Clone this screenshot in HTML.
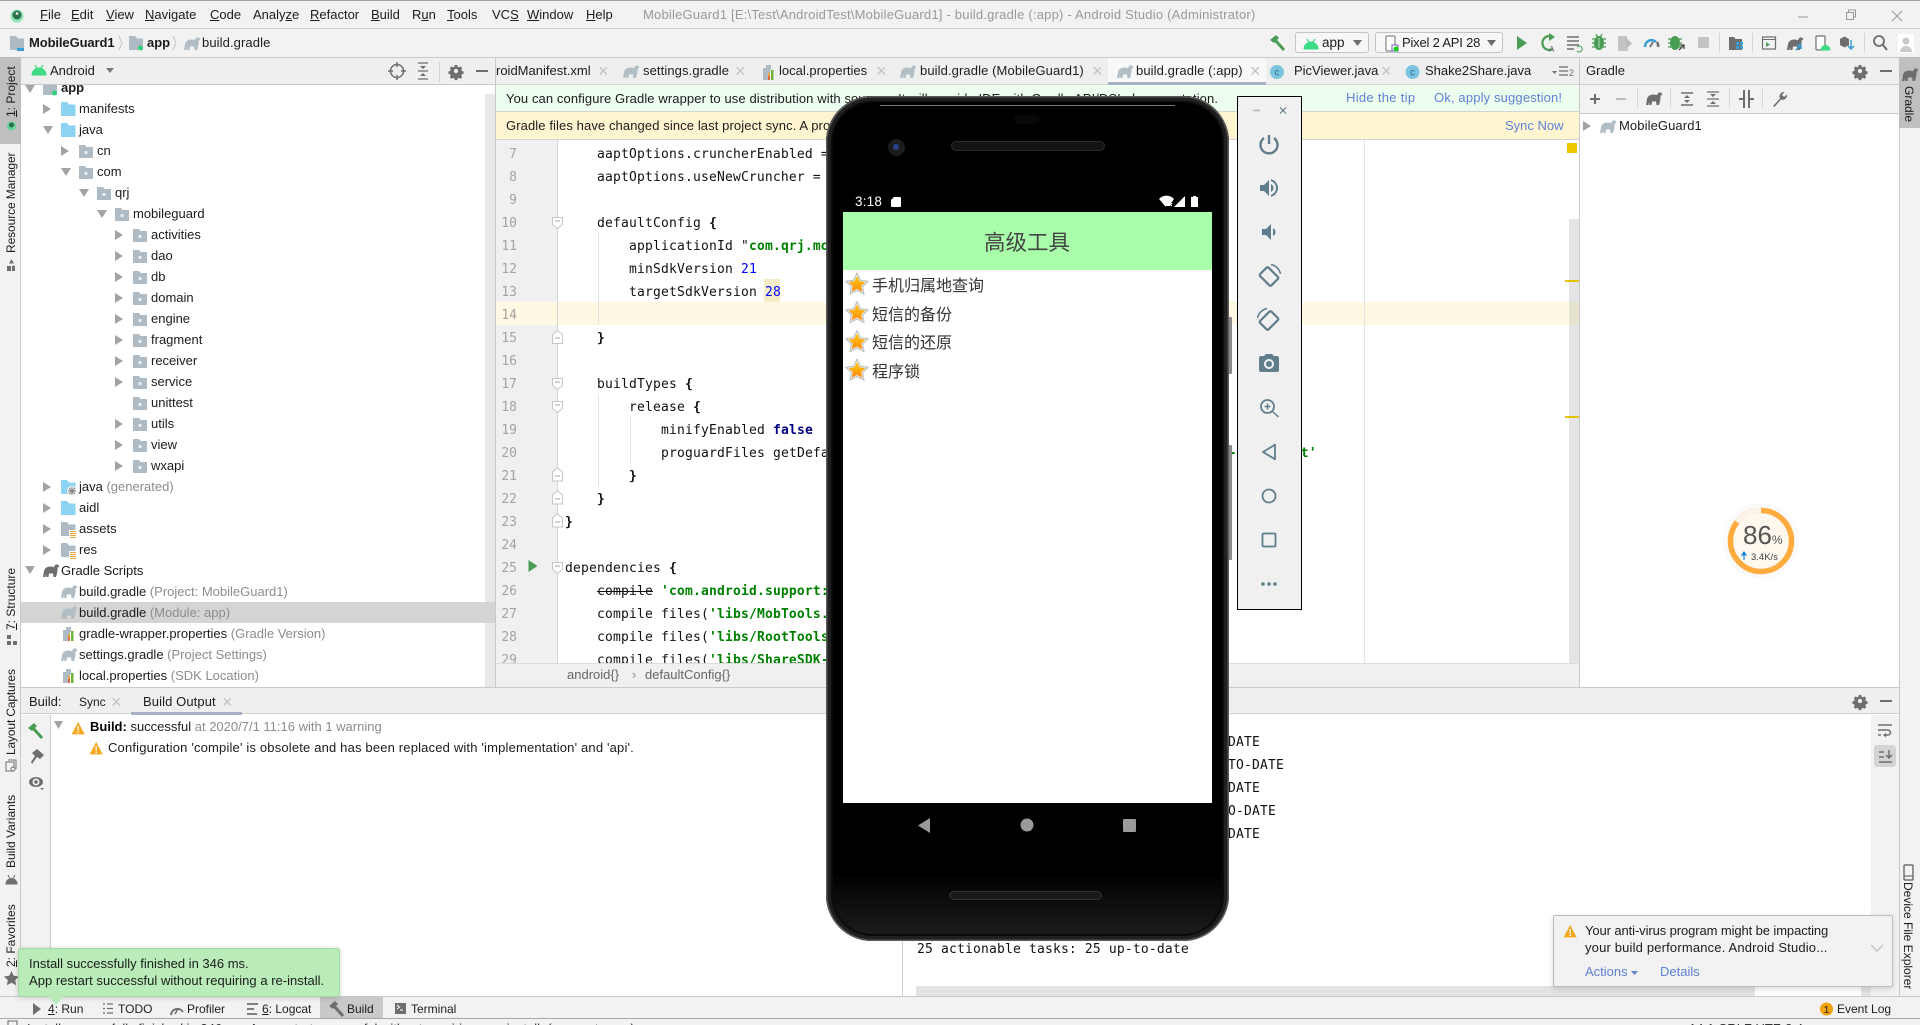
<!DOCTYPE html>
<html><head><meta charset="utf-8"><title>MobileGuard1 - Android Studio</title>
<style>
html,body{margin:0;padding:0;background:#fff}
#root{position:relative;width:1920px;height:1025px;overflow:hidden;background:#fff;font-family:"Liberation Sans","Noto Sans CJK SC",sans-serif}
.b{position:absolute}
.t{position:absolute;white-space:nowrap;font:13px/18px "Liberation Sans","Noto Sans CJK SC",sans-serif;color:#1c1c1c}
.s12{font-size:12px}
.g{color:#8c8c8c}
.l{color:#5f82d6}
.d{color:#999}
.x{position:absolute;white-space:nowrap;font:18px/18px "Liberation Sans",sans-serif;color:#c2c2c2}
.c{position:absolute;white-space:pre;font:13px/18px "DejaVu Sans Mono",monospace;letter-spacing:.17px;color:#111}
.c b.s{color:#008000}
.c i{font-style:normal;color:#0000ff}
.n{position:absolute;left:496px;width:21px;text-align:right;font:13px/18px "DejaVu Sans Mono",monospace;color:#a3a3a3}
.v{position:absolute;white-space:nowrap;font:12px/14px "Liberation Sans",sans-serif;color:#1c1c1c;transform-origin:0 0;transform:rotate(-90deg)}
.r{transform:rotate(90deg)}
.clip{position:absolute;overflow:hidden}
svg{position:absolute;left:0;top:0;overflow:visible}
</style></head><body><div id="root">

<!-- frame backgrounds -->
<div class="b" style="left:0;top:0;width:1920px;height:57px;background:#f2f2f2"></div>
<div class="b" style="left:0;top:0;width:1920px;height:1px;background:#a0a0a0"></div>
<div class="b" style="left:0;top:28px;width:1920px;height:1px;background:#cfcfcf"></div>
<div class="b" style="left:0;top:57px;width:1920px;height:1px;background:#c9c9c9"></div>
<div class="b" style="left:0;top:57px;width:21px;height:961px;background:#f2f2f2;border-right:1px solid #c9c9c9;box-sizing:border-box"></div>
<div class="b" style="left:0;top:57px;width:21px;height:87px;background:#bfbfbf"></div>
<div class="b" style="left:1899px;top:57px;width:21px;height:961px;background:#f2f2f2;border-left:1px solid #c9c9c9;box-sizing:border-box"></div>
<div class="b" style="left:1899px;top:57px;width:21px;height:71px;background:#bfbfbf"></div>

<!-- title bar text -->
<span class="t" style="left:40px;top:6px"><u>F</u>ile</span>
<span class="t" style="left:71px;top:6px"><u>E</u>dit</span>
<span class="t" style="left:106px;top:6px"><u>V</u>iew</span>
<span class="t" style="left:145px;top:6px"><u>N</u>avigate</span>
<span class="t" style="left:210px;top:6px"><u>C</u>ode</span>
<span class="t" style="left:253px;top:6px">Analy<u>z</u>e</span>
<span class="t" style="left:310px;top:6px"><u>R</u>efactor</span>
<span class="t" style="left:371px;top:6px"><u>B</u>uild</span>
<span class="t" style="left:412px;top:6px">R<u>u</u>n</span>
<span class="t" style="left:447px;top:6px"><u>T</u>ools</span>
<span class="t" style="left:492px;top:6px">VC<u>S</u></span>
<span class="t" style="left:527px;top:6px"><u>W</u>indow</span>
<span class="t" style="left:586px;top:6px"><u>H</u>elp</span>
<span class="t d" style="left:643px;top:6px;letter-spacing:.21px">MobileGuard1 [E:\Test\AndroidTest\MobileGuard1] - build.gradle (:app) - Android Studio (Administrator)</span>

<!-- breadcrumb -->
<span class="t" style="left:29px;top:34px;font-weight:bold;letter-spacing:-.1px">MobileGuard1</span>
<span class="t" style="left:147px;top:34px;font-weight:bold">app</span>
<span class="t" style="left:202px;top:34px;letter-spacing:.1px">build.gradle</span>

<!-- run config dropdowns -->
<div class="b" style="left:1295px;top:32px;width:74px;height:21px;box-sizing:border-box;border:1px solid #c4c4c4;border-radius:3px;background:#f7f7f7"></div>
<div class="b" style="left:1375px;top:32px;width:128px;height:21px;box-sizing:border-box;border:1px solid #c4c4c4;border-radius:3px;background:#f7f7f7"></div>
<span class="t" style="left:1322px;top:34px;font-size:13.500px">app</span>
<span class="t" style="left:1402px;top:34px;letter-spacing:-.2px">Pixel 2 API 28</span>

<!-- project tree -->
<div class="clip" style="left:21px;top:84px;width:474px;height:603px">
 <div class="b" style="left:-21px;top:-84px;width:1920px;height:1025px">
  <div class="b" style="left:485px;top:94px;width:10px;height:593px;background:#e8e8e8"></div>
  <div class="b" style="left:21px;top:602px;width:474px;height:21px;background:#d4d4d4"></div>
  <svg width="1920" height="1025">
   <defs>
    <g id="pkg"><path fill="#aebbc4" d="M0 0h6l1.500 2H14v11H0z"/><circle cx="7" cy="7.500" r="1.600" fill="#e9eef2"/></g>
    <g id="src"><path fill="#8bd3f0" d="M0 0h6l2 2.500h6.500V14H0z"/></g>
    <g id="res"><path fill="#aebbc4" d="M0 0h6l2 2.500h6.500V14H0z"/><path fill="#fff" d="M8 8h7.500v8H8z"/><path stroke="#e8a33c" stroke-width="1.100" d="M9 9.500h6M9 11.500h6M9 13.500h6M9 15.500h6"/></g>
    <g id="mod"><path fill="#aebbc4" d="M0 0h6l2 2.500h6V14H0z"/><circle cx="11.500" cy="12" r="2.500" fill="#2fd07c"/></g>
    <path id="tr" fill="#a3a3a3" d="M0 0l8 5-8 5z"/>
    <path id="td" fill="#a3a3a3" d="M0 0h10l-5 8z"/>
    <path id="ele" d="M0 14L1 8Q2 3.500 7.500 3.500Q9.500 3.500 11 4.300Q12 1 14.500 1.500Q16.500 2 16 4.500L14.600 4Q14.800 9 13 14H10.500L10 10.500H6L5.500 14H3.300L3 11L2.400 14Z"/>
    <g id="prop"><path fill="#aebbc4" d="M1 5h3V2h5v5h-1v9H1z"/><path fill="#e8a33c" d="M6 9h2v7H6z"/><path fill="#e06c3c" d="M6 12h2v4H6z"/><path fill="#6fb33c" d="M9 6h2.500v10H9z"/></g>
   </defs>
   <use href="#td" x="25" y="85"/><use href="#mod" x="43" y="81"/>
   <use href="#tr" x="43" y="104"/><use href="#src" x="61" y="102"/>
   <use href="#td" x="43" y="126"/><use href="#src" x="61" y="123"/>
   <use href="#tr" x="61" y="146"/><use href="#pkg" x="79" y="145"/>
   <use href="#td" x="61" y="168"/><use href="#pkg" x="79" y="166"/>
   <use href="#td" x="79" y="189"/><use href="#pkg" x="97" y="187"/>
   <use href="#td" x="97" y="210"/><use href="#pkg" x="115" y="208"/>
   <use href="#tr" x="115" y="230"/><use href="#pkg" x="133" y="229"/>
   <use href="#tr" x="115" y="251"/><use href="#pkg" x="133" y="250"/>
   <use href="#tr" x="115" y="272"/><use href="#pkg" x="133" y="271"/>
   <use href="#tr" x="115" y="293"/><use href="#pkg" x="133" y="292"/>
   <use href="#tr" x="115" y="314"/><use href="#pkg" x="133" y="313"/>
   <use href="#tr" x="115" y="335"/><use href="#pkg" x="133" y="334"/>
   <use href="#tr" x="115" y="356"/><use href="#pkg" x="133" y="355"/>
   <use href="#tr" x="115" y="377"/><use href="#pkg" x="133" y="376"/>
   <use href="#pkg" x="133" y="397"/>
   <use href="#tr" x="115" y="419"/><use href="#pkg" x="133" y="418"/>
   <use href="#tr" x="115" y="440"/><use href="#pkg" x="133" y="439"/>
   <use href="#tr" x="115" y="461"/><use href="#pkg" x="133" y="460"/>
   <use href="#tr" x="43" y="482"/><use href="#src" x="61" y="480"/>
   <g transform="translate(67,486)"><circle cx="5" cy="5" r="5" fill="#f4f4f4"/><path stroke="#8a8a8a" stroke-width="1.200" d="M1 5h8M5 1v8M2 2l6 6M8 2l-6 6"/></g>
   <use href="#tr" x="43" y="503"/><use href="#src" x="61" y="501"/>
   <use href="#tr" x="43" y="524"/><use href="#res" x="61" y="522"/>
   <use href="#tr" x="43" y="545"/><use href="#res" x="61" y="543"/>
   <use href="#td" x="25" y="566"/><use href="#ele" x="43" y="563" fill="#6e6e6e"/>
   <use href="#ele" x="61" y="584" fill="#b2bec6"/>
   <use href="#ele" x="61" y="605" fill="#b2bec6"/>
   <use href="#prop" x="62" y="625"/>
   <use href="#ele" x="61" y="647" fill="#b2bec6"/>
   <use href="#prop" x="62" y="667"/>
  </svg>
  <span class="t" style="left:61px;top:79px;font-weight:bold">app</span>
  <span class="t" style="left:79px;top:100px">manifests</span>
  <span class="t" style="left:79px;top:121px">java</span>
  <span class="t" style="left:97px;top:142px">cn</span>
  <span class="t" style="left:97px;top:163px">com</span>
  <span class="t" style="left:115px;top:184px">qrj</span>
  <span class="t" style="left:133px;top:205px">mobileguard</span>
  <span class="t" style="left:151px;top:226px">activities</span>
  <span class="t" style="left:151px;top:247px">dao</span>
  <span class="t" style="left:151px;top:268px">db</span>
  <span class="t" style="left:151px;top:289px">domain</span>
  <span class="t" style="left:151px;top:310px">engine</span>
  <span class="t" style="left:151px;top:331px">fragment</span>
  <span class="t" style="left:151px;top:352px">receiver</span>
  <span class="t" style="left:151px;top:373px">service</span>
  <span class="t" style="left:151px;top:394px">unittest</span>
  <span class="t" style="left:151px;top:415px">utils</span>
  <span class="t" style="left:151px;top:436px">view</span>
  <span class="t" style="left:151px;top:457px">wxapi</span>
  <span class="t" style="left:79px;top:478px">java <span class="g">(generated)</span></span>
  <span class="t" style="left:79px;top:499px">aidl</span>
  <span class="t" style="left:79px;top:520px">assets</span>
  <span class="t" style="left:79px;top:541px">res</span>
  <span class="t" style="left:61px;top:562px">Gradle Scripts</span>
  <span class="t" style="left:79px;top:583px">build.gradle <span class="g">(Project: MobileGuard1)</span></span>
  <span class="t" style="left:79px;top:604px">build.gradle <span class="g">(Module: app)</span></span>
  <span class="t" style="left:79px;top:625px">gradle-wrapper.properties <span class="g">(Gradle Version)</span></span>
  <span class="t" style="left:79px;top:646px">settings.gradle <span class="g">(Project Settings)</span></span>
  <span class="t" style="left:79px;top:667px">local.properties <span class="g">(SDK Location)</span></span>
 </div>
</div>

<!-- project header -->
<div class="b" style="left:21px;top:58px;width:474px;height:26px;background:#efefef;border-bottom:1px solid #c9c9c9;box-sizing:content-box"></div>
<span class="t" style="left:50px;top:62px">Android</span>

<!-- editor -->
<div class="b" style="left:495px;top:57px;width:1px;height:630px;background:#c9c9c9"></div>
<div class="b" style="left:496px;top:58px;width:1083px;height:26px;background:#efefef"></div>
<div class="b" style="left:496px;top:84px;width:1083px;height:28px;background:#edfdee;box-sizing:border-box;border-top:1px solid #d4d4d4;border-bottom:1px solid #d4d4d4"></div>
<div class="b" style="left:496px;top:112px;width:1083px;height:28px;background:#fff5d0;box-sizing:border-box;border-bottom:1px solid #d4d4d4"></div>
<div class="b" style="left:496px;top:140px;width:61px;height:523px;background:#f0f0f0;border-right:1px solid #d4d4d4"></div>
<div class="b" style="left:496px;top:302px;width:61px;height:23px;background:#fff9e3"></div>
<div class="b" style="left:558px;top:302px;width:1021px;height:23px;background:#fff9e3"></div>
<div class="b" style="left:1364px;top:140px;width:1px;height:523px;background:#e5e5e5"></div>
<div class="b" style="left:1569px;top:219px;width:10px;height:444px;background:#e4e4e4"></div>
<div class="b" style="left:1569px;top:302px;width:10px;height:23px;background:#e6e3cf"></div>
<div class="b" style="left:1567px;top:143px;width:10px;height:10px;background:#edc700"></div>
<div class="b" style="left:1565px;top:280px;width:14px;height:2px;background:#e3c000"></div>
<div class="b" style="left:1565px;top:416px;width:14px;height:2px;background:#e3c000"></div>
<div class="b" style="left:764px;top:279px;width:16px;height:23px;background:#f6edc8"></div>
<div class="b" style="left:598px;top:232px;width:1px;height:93px;background:#e2e2e2"></div>
<div class="b" style="left:598px;top:395px;width:1px;height:91px;background:#e2e2e2"></div>
<div class="b" style="left:630px;top:417px;width:1px;height:46px;background:#e2e2e2"></div>

<!-- tabs active -->
<div class="b" style="left:1108px;top:58px;width:158px;height:24px;background:#f8f8f8"></div>
<div class="b" style="left:1108px;top:82px;width:158px;height:3px;background:#a6b1c3"></div>
<span class="t" style="left:496px;top:62px">roidManifest.xml</span><span class="x" style="left:598px;top:62px">×</span>
<span class="t" style="left:643px;top:62px;letter-spacing:.1px">settings.gradle</span><span class="x" style="left:735px;top:62px">×</span>
<span class="t" style="left:779px;top:62px">local.properties</span><span class="x" style="left:876px;top:62px">×</span>
<span class="t" style="left:920px;top:62px;letter-spacing:.1px">build.gradle (MobileGuard1)</span><span class="x" style="left:1092px;top:62px">×</span>
<span class="t" style="left:1136px;top:62px;letter-spacing:.1px">build.gradle (:app)</span><span class="x" style="left:1250px;top:62px">×</span>
<span class="t" style="left:1294px;top:62px">PicViewer.java</span><span class="x" style="left:1381px;top:62px">×</span>
<span class="t" style="left:1425px;top:62px">Shake2Share.java</span>

<!-- tip bars -->
<span class="t" style="left:506px;top:90px;letter-spacing:.1px">You can configure Gradle wrapper to use distribution with sources. It will provide IDE with Gradle API/DSL documentation.</span>
<span class="t l" style="left:1346px;top:89px;letter-spacing:.3px">Hide the tip</span>
<span class="t l" style="left:1434px;top:89px;letter-spacing:.15px">Ok, apply suggestion!</span>
<span class="t" style="left:506px;top:117px;letter-spacing:.1px">Gradle files have changed since last project sync. A project sync may be necessary for the IDE to work properly.</span>
<span class="t l" style="left:1505px;top:117px">Sync Now</span>

<!-- code -->
<div class="clip" style="left:0;top:0;width:1920px;height:663px">
 <div class="b" style="left:0;top:2px;width:1920px;height:661px">
 <span class="n" style="top:144px">7</span><span class="n" style="top:167px">8</span><span class="n" style="top:190px">9</span><span class="n" style="top:213px">10</span><span class="n" style="top:236px">11</span><span class="n" style="top:259px">12</span><span class="n" style="top:282px">13</span><span class="n" style="top:305px">14</span><span class="n" style="top:328px">15</span><span class="n" style="top:351px">16</span><span class="n" style="top:374px">17</span><span class="n" style="top:397px">18</span><span class="n" style="top:420px">19</span><span class="n" style="top:443px">20</span><span class="n" style="top:466px">21</span><span class="n" style="top:489px">22</span><span class="n" style="top:512px">23</span><span class="n" style="top:535px">24</span><span class="n" style="top:558px">25</span><span class="n" style="top:581px">26</span><span class="n" style="top:604px">27</span><span class="n" style="top:627px">28</span><span class="n" style="top:650px">29</span>
 <span class="c" style="left:597px;top:144px">aaptOptions.cruncherEnabled = false</span>
 <span class="c" style="left:597px;top:167px">aaptOptions.useNewCruncher = false</span>
 <span class="c" style="left:597px;top:213px">defaultConfig <b>{</b></span>
 <span class="c" style="left:629px;top:236px">applicationId "<b class="s">com.qrj.mobileguard</b>"</span>
 <span class="c" style="left:629px;top:259px">minSdkVersion <i>21</i></span>
 <span class="c" style="left:629px;top:282px">targetSdkVersion <i>28</i></span>
 <span class="c" style="left:597px;top:328px"><b>}</b></span>
 <span class="c" style="left:597px;top:374px">buildTypes <b>{</b></span>
 <span class="c" style="left:629px;top:397px">release <b>{</b></span>
 <span class="c" style="left:661px;top:420px">minifyEnabled <b style="color:#000080">false</b></span>
 <span class="c" style="left:661px;top:443px">proguardFiles getDefaultProguardFile(<b class="s">'proguard-android.txt'</b>), <b class="s">'proguard-rules.txt'</b></span>
 <span class="c" style="left:629px;top:466px"><b>}</b></span>
 <span class="c" style="left:597px;top:489px"><b>}</b></span>
 <span class="c" style="left:565px;top:512px"><b>}</b></span>
 <span class="c" style="left:565px;top:558px">dependencies <b>{</b></span>
 <span class="c" style="left:597px;top:581px"><s>compile</s> <b class="s">'com.android.support:appcompat-v7:28.0.0'</b></span>
 <span class="c" style="left:597px;top:604px">compile files(<b class="s">'libs/MobTools.jar'</b>)</span>
 <span class="c" style="left:597px;top:627px">compile files(<b class="s">'libs/RootTools.jar'</b>)</span>
 <span class="c" style="left:597px;top:650px">compile files(<b class="s">'libs/ShareSDK-Core.jar'</b>)</span>
 </div>
</div>

<!-- editor breadcrumb -->
<div class="b" style="left:496px;top:663px;width:1083px;height:24px;background:#f0f0f0;border-top:1px solid #dcdcdc;box-sizing:border-box"></div>
<span class="t g" style="left:567px;top:666px;color:#666">android{}</span>
<span class="t g" style="left:632px;top:666px">›</span>
<span class="t g" style="left:645px;top:666px;color:#666">defaultConfig{}</span>

<!-- Gradle panel -->
<div class="b" style="left:1579px;top:57px;width:1px;height:630px;background:#c9c9c9"></div>
<div class="b" style="left:1580px;top:58px;width:319px;height:26px;background:#efefef;border-bottom:1px solid #d0d0d0"></div>
<div class="b" style="left:1580px;top:85px;width:319px;height:28px;background:#f2f2f2;border-bottom:1px solid #c9c9c9"></div>
<span class="t" style="left:1586px;top:62px">Gradle</span>
<span class="t" style="left:1619px;top:117px;letter-spacing:.1px">MobileGuard1</span>

<!-- build panel -->
<div class="b" style="left:21px;top:687px;width:1878px;height:27px;background:#efefef;border-top:1px solid #c9c9c9;border-bottom:1px solid #d0d0d0;box-sizing:border-box"></div>
<div class="b" style="left:131px;top:712px;width:111px;height:3px;background:#a6b1c3"></div>
<span class="t" style="left:29px;top:693px">Build:</span>
<span class="t s12" style="left:79px;top:693px">Sync</span><span class="x" style="left:111px;top:693px">×</span>
<span class="t" style="left:143px;top:693px;letter-spacing:.1px">Build Output</span><span class="x" style="left:222px;top:693px">×</span>
<div class="b" style="left:50px;top:715px;width:1px;height:281px;background:#d0d0d0"></div>
<div class="b" style="left:21px;top:715px;width:29px;height:281px;background:#f2f2f2"></div>
<div class="b" style="left:902px;top:715px;width:1px;height:281px;background:#cfcfcf"></div>
<div class="b" style="left:1871px;top:715px;width:28px;height:281px;background:#f2f2f2"></div>
<div class="b" style="left:1874px;top:745px;width:22px;height:22px;background:#d4d4d4;border-radius:3px"></div>
<span class="t" style="left:90px;top:718px"><b style="color:#000">Build:</b> successful <span class="g">at 2020/7/1 11:16 with 1 warning</span></span>
<span class="t" style="left:108px;top:739px;letter-spacing:.17px">Configuration 'compile' is obsolete and has been replaced with 'implementation' and 'api'.</span>
<span class="c" style="right:660px;top:734px">&gt; Task :app:compileDebugAidl UP-TO-DATE</span>
<span class="c" style="right:636px;top:757px">&gt; Task :app:compileDebugRenderscript UP-TO-DATE</span>
<span class="c" style="right:660px;top:780px">&gt; Task :app:checkDebugManifest UP-TO-DATE</span>
<span class="c" style="right:644px;top:803px">&gt; Task :app:generateDebugBuildConfig UP-TO-DATE</span>
<span class="c" style="right:660px;top:826px">&gt; Task :app:prepareLintJar UP-TO-DATE</span>
<span class="c" style="left:917px;top:941px">25 actionable tasks: 25 up-to-date</span>
<div class="b" style="left:916px;top:986px;width:839px;height:10px;background:#e3e3e3"></div>
<div class="b" style="left:1861px;top:986px;width:10px;height:10px;background:#e3e3e3"></div>

<!-- bottom bars -->
<div class="b" style="left:0;top:996px;width:1920px;height:22px;background:#f2f2f2;border-top:1px solid #c9c9c9;box-sizing:border-box"></div>
<div class="b" style="left:320px;top:997px;width:63px;height:21px;background:#c9c9c9"></div>
<div class="b" style="left:0;top:1018px;width:1920px;height:7px;background:#f2f2f2;border-top:1px solid #a8a8a8;box-sizing:border-box"></div>
<span class="t s12" style="left:48px;top:1000px"><u>4</u>: Run</span>
<span class="t s12" style="left:118px;top:1000px">TODO</span>
<span class="t s12" style="left:187px;top:1000px">Profiler</span>
<span class="t s12" style="left:262px;top:1000px"><u>6</u>: Logcat</span>
<span class="t s12" style="left:347px;top:1000px">Build</span>
<span class="t s12" style="left:411px;top:1000px">Terminal</span>
<span class="t s12" style="left:1837px;top:1000px">Event Log</span>
<div class="clip" style="left:0;top:1019px;width:1920px;height:6px">
 <span class="t" style="left:27px;top:1px;color:#333">Install successfully finished in 346 ms: App restart successful without requiring a re-install. (moments ago)</span>
 <span class="t" style="left:1689px;top:1px;color:#333">14:1  CRLF  UTF-8  4 spaces</span>
</div>

<!-- vertical stripe labels -->
<span class="v" style="left:4px;top:117px"><u>1</u>: Project</span>
<span class="v" style="left:4px;top:253px;letter-spacing:-.1px">Resource Manager</span>
<span class="v" style="left:4px;top:630px"><u>7</u>: Structure</span>
<span class="v" style="left:4px;top:755px;letter-spacing:-.15px">Layout Captures</span>
<span class="v" style="left:4px;top:868px">Build Variants</span>
<span class="v" style="left:4px;top:967px"><u>2</u>: Favorites</span>
<span class="v r" style="left:1916px;top:86px">Gradle</span>
<span class="v r" style="left:1915px;top:882px">Device File Explorer</span>

<!-- main icon layer -->
<svg width="1920" height="1025">
 <defs>
  <path id="eb" d="M0 14L1 8Q2 3.500 7.500 3.500Q9.500 3.500 11 4.300Q12 1 14.500 1.500Q16.500 2 16 4.500L14.600 4Q14.800 9 13 14H10.500L10 10.500H6L5.500 14H3.300L3 11L2.400 14Z"/>
  <path id="gear" fill="#6e6e6e" fill-rule="evenodd" transform="scale(.85)" d="M-1.500-7h3l.4 2 1.500.7 1.800-1.100 2.100 2.100-1.100 1.800.7 1.500 2 .4v3l-2 .4-.7 1.500 1.100 1.800-2.100 2.100-1.800-1.100-1.500.7-.4 2h-3l-.4-2-1.500-.7-1.800 1.100-2.100-2.100 1.100-1.800-.7-1.500-2-.4v-3l2-.4.7-1.500-1.100-1.800 2.100-2.100 1.800 1.100 1.500-.7zM0-2.500a2.500 2.500 0 1 0 0 5a2.500 2.500 0 1 0 0-5z"/>
  <g id="andr"><path d="M0 11a7 7 0 0 1 14 0z"/><path stroke-width="1.200" d="M3 1l2 3M11 1L9 4" fill="none"/></g>
  <g id="hamm"><path fill="none" stroke-width="3" d="M5 5l9 10"/><path d="M0 5L6 0l3 3-5 5z" stroke="none"/></g>
  <g id="warn" transform="scale(.88)"><path fill="#f4a81d" d="M7 0l7.500 14H-.500z"/><path fill="#fff" d="M6.200 4.500h1.600l-.2 5.500h-1.200zM6.200 11h1.600v1.600H6.200z"/></g>
 </defs>
 <!-- android studio logo -->
 <circle cx="17" cy="16" r="6.500" fill="#3ddc84" opacity=".55"/><circle cx="17" cy="15" r="4.500" fill="#2f6f4f"/><circle cx="17" cy="13.500" r="1.300" fill="#fff"/>
 <!-- breadcrumb icons -->
 <g transform="translate(10,36)"><path fill="#aebbc4" d="M0 0h6l2 2.500h6V14H0z"/><path fill="#389fd6" d="M7 12h7v3H7z"/></g>
 <g transform="translate(129,36)"><path fill="#aebbc4" d="M0 0h6l2 2.500h6V14H0z"/><circle cx="11.500" cy="12" r="2.500" fill="#2fd07c"/></g>
 <path d="M119 36l3 7-3 7M173 36l3 7-3 7" fill="none" stroke="#c4c4c4"/>
 <use href="#eb" x="184" y="36" fill="#b2bec6"/>
 <!-- project header -->
 <g transform="translate(32,64)" fill="#3ddc84" stroke="#3ddc84"><use href="#andr"/></g>
 <path d="M106 68h8l-4 5z" fill="#777"/>
 <circle cx="397" cy="71" r="6.500" fill="none" stroke="#6e6e6e" stroke-width="1.500"/><path d="M397 62v5M397 75v5M388 71h5M401 71h5" stroke="#6e6e6e" stroke-width="1.500"/>
 <path d="M418 63h10M418 79h10M418 71h10" stroke="#6e6e6e" stroke-width="1.200"/><path d="M423 69l-3-3h6zM423 73l-3 3h6z" fill="#6e6e6e"/>
 <path d="M439.500 62v20" stroke="#d4d4d4"/>
 <use href="#gear" x="456" y="71"/>
 <path d="M476 71h12" stroke="#6e6e6e" stroke-width="2"/>
 <!-- editor tabs icons -->
 <use href="#eb" x="623" y="64" fill="#b2bec6"/>
 <g transform="translate(762,63)"><path fill="#aebbc4" d="M1 5h3V2h5v5h-1v10H1z"/><path fill="#e8a33c" d="M6 10h2v7H6z"/><path fill="#e06c3c" d="M6 13h2v4H6z"/><path fill="#6fb33c" d="M9 7h2.500v10H9z"/></g>
 <use href="#eb" x="900" y="64" fill="#b2bec6"/>
 <use href="#eb" x="1117" y="64" fill="#b2bec6"/>
 <circle cx="1277" cy="72" r="7" fill="#7cc4e0"/><circle cx="1412.500" cy="72" r="7" fill="#7cc4e0"/>
 <text x="1412.500" y="75.500" text-anchor="middle" font-size="10" font-family="Liberation Sans" fill="#2f6f8f">c</text>
 <text x="1277" y="75.500" text-anchor="middle" font-size="10" font-family="Liberation Sans" fill="#2f6f8f">c</text>
 <path d="M1552 71h5l-2.500 3z" fill="#6e6e6e"/><path d="M1559 67h9M1559 71h9M1559 75h9" stroke="#6e6e6e" stroke-width="1.200"/>
 <text x="1569" y="76" font-size="9" font-family="Liberation Sans" fill="#6e6e6e">2</text>
 <!-- gutter fold icons -->
 <g fill="#fff" stroke="#c6c6c6">
  <path d="M552.500 217.500h10v7l-5 4-5-4z"/><path d="M552.500 378.500h10v7l-5 4-5-4z"/><path d="M552.500 401.500h10v7l-5 4-5-4z"/><path d="M552.500 562.500h10v7l-5 4-5-4z"/>
  <path d="M552.500 343.500v-9l5-4 5 4v9z" /><path d="M552.500 481v-9l5-4 5 4v9z"/><path d="M552.500 504v-9l5-4 5 4v9z"/><path d="M552.500 527v-9l5-4 5 4v9z"/>
 </g>
 <path d="M555 221h5M555 382h5M555 405h5M555 566h5M555 338h5M555 476h5M555 499h5M555 522h5" stroke="#aaa"/>
 <path d="M528.500 560l9 6-9 6z" fill="#499c54"/>
 <!-- main toolbar icons -->
 <g transform="translate(1270,35)" fill="#499c54" stroke="#499c54"><use href="#hamm"/></g>
 <g transform="translate(1304,38)" fill="#3ddc84" stroke="#3ddc84"><use href="#andr"/></g>
 <path d="M1353 40h9l-4.500 6z" fill="#6e6e6e"/>
 <rect x="1386" y="36" width="9" height="15" rx="1" fill="#fff" stroke="#6e6e6e"/><rect x="1392" y="45" width="6" height="6" fill="#fff" stroke="#7e57c2"/><circle cx="1396" cy="49" r="2.500" fill="#12d012"/>
 <path d="M1487 40h9l-4.500 6z" fill="#6e6e6e"/>
 <path d="M1517 36l10 7-10 7z" fill="#499c54"/>
 <path d="M1553 37a7 7 0 1 0 0 12" fill="none" stroke="#499c54" stroke-width="2.200"/><path d="M1549 33l6 4-6 4z" fill="#499c54"/><text x="1549" y="52" font-size="8" font-family="Liberation Sans" fill="#6e6e6e">A</text>
 <path d="M1567 37h12M1567 41h12M1567 45h12M1567 49h7" stroke="#6e6e6e" stroke-width="1.600"/><path d="M1577 47a3 3 0 1 1 0 4" fill="none" stroke="#499c54"/>
 <ellipse cx="1599" cy="43" rx="5" ry="7" fill="#499c54"/><path d="M1592 39h14M1592 43h14M1592 47h14M1596 34l1.500 3M1602 34l-1.500 3" stroke="#499c54" stroke-width="1.300"/><path d="M1599 38v10" stroke="#fff" stroke-width=".6"/>
 <path d="M1618 36h9l1 15h-10z" fill="#c4c4c4"/><path d="M1626 38l6 5.500-6 5.500z" fill="#bbb"/>
 <path d="M1645 47a6.500 6.500 0 0 1 11-5" fill="none" stroke="#389fd6" stroke-width="2.500"/><path d="M1657 42a6.500 6.500 0 0 1 1 5" fill="none" stroke="#6e6e6e" stroke-width="2.500"/><path d="M1650 47l3-5" stroke="#6e6e6e" stroke-width="1.800"/>
 <ellipse cx="1675" cy="43" rx="5" ry="7" fill="#499c54"/><path d="M1668 39h14M1668 43h14M1668 47h14" stroke="#499c54" stroke-width="1.300"/><path d="M1679 50l5-5m-4 0h4v4" fill="none" stroke="#444" stroke-width="1.300"/>
 <rect x="1698" y="37" width="11" height="11" fill="#c4c4c4"/>
 <path d="M1719.500 33v20M1752.500 33v20M1864.500 33v20" stroke="#d4d4d4"/>
 <g transform="translate(1729,37)"><path d="M0 0h5l1.500 2H13v11H0z" fill="#6e6e6e"/><rect x="7" y="5" width="3" height="3" fill="#389fd6"/><rect x="11" y="5" width="3" height="3" fill="#389fd6"/><rect x="7" y="9" width="3" height="3" fill="#389fd6"/><rect x="11" y="9" width="3" height="3" fill="#389fd6"/></g>
 <rect x="1762.500" y="37" width="13" height="12" fill="none" stroke="#6e6e6e" stroke-width="1.200"/><path d="M1762 39.500h14" stroke="#6e6e6e"/><path d="M1766 42l4 2.500-4 2.500z" fill="#499c54"/>
 <use href="#eb" x="1787" y="36" fill="#6e6e6e"/><path d="M1796 50l5-5m-4 0h4v4" fill="none" stroke="#389fd6" stroke-width="1.500"/>
 <rect x="1816" y="36" width="9" height="14" rx="1" fill="#fff" stroke="#6e6e6e" stroke-width="1.200"/><g transform="translate(1821,44)" fill="#3ddc84" stroke="#3ddc84"><path d="M0 6a4 4 0 0 1 9 0z"/></g>
 <path d="M1840 39l4.500-2.500 4.500 2.500v6l-4.500 2.500-4.500-2.500z" fill="#6e6e6e"/><path d="M1851 40v9m-3-3l3 3 3-3" fill="none" stroke="#389fd6" stroke-width="1.500"/>
 <circle cx="1879" cy="41" r="5" fill="none" stroke="#6e6e6e" stroke-width="1.800"/><path d="M1883 45l4 5" stroke="#6e6e6e" stroke-width="2"/>
 <rect x="1898" y="34" width="16" height="19" fill="#fff"/><circle cx="1906" cy="41" r="3.500" fill="#c9c9c9"/><path d="M1900 52a6 6 0 0 1 12 0z" fill="#c9c9c9"/>
 <!-- window controls -->
 <path d="M1798 17h10" stroke="#999"/>
 <path d="M1846.500 12.500h7v7h-7zM1848.500 12.500v-2.500h7v7h-2" fill="none" stroke="#999"/>
 <path d="M1892 11l10 10M1902 11l-10 10" stroke="#999"/>
 <!-- left stripe icons -->
 <circle cx="11.500" cy="126" r="4.500" fill="#3ddc84" opacity=".7"/><circle cx="11.500" cy="125" r="2.500" fill="#2f6f4f"/>
 <path d="M11.500 259l2.500 4.500H9zM7 266h4v5H7zM12 266l3-.5v5.500h-3z" fill="#6e6e6e"/>
 <path d="M7 638h4v4H7zM7 644h4v4H7zM13 644h4v4h-4z" transform="translate(0,-3)" fill="#6e6e6e"/>
 <path d="M6 762h8v9H6zM8 760h8v9" fill="none" stroke="#6e6e6e"/><circle cx="13" cy="769" r="2" fill="#f2f2f2" stroke="#6e6e6e"/>
 <g transform="translate(6,874)" fill="#6e6e6e" stroke="#6e6e6e"><path d="M0 10a5.500 5.500 0 0 1 11 0z"/><path d="M2 1l1.500 3M9 1L7.500 4" stroke-width="1"/></g>
 <path d="M11.500 971l2.300 4.800 5.200.7-3.800 3.600.9 5.200-4.600-2.500-4.600 2.500.9-5.200-3.800-3.600 5.200-.7z" fill="#6e6e6e"/>
 <!-- right stripe icons -->
 <use href="#eb" x="1902" y="67" fill="#6e6e6e"/>
 <rect x="1904" y="865" width="9" height="15" rx="1" fill="none" stroke="#555" stroke-width="1.200"/><path d="M1904 876h9" stroke="#555"/>
 <!-- gradle panel icons -->
 <use href="#gear" x="1860" y="71"/>
 <path d="M1880 71h12" stroke="#6e6e6e" stroke-width="2"/>
 <path d="M1590 99h10M1595 94v10" stroke="#6e6e6e" stroke-width="2"/>
 <path d="M1616 99h10" stroke="#bdbdbd" stroke-width="2"/>
 <path d="M1637.500 88v20M1670.500 88v20M1729.500 88v20M1762.500 88v20" stroke="#d4d4d4"/>
 <use href="#eb" x="1646" y="91" fill="#6e6e6e"/>
 <path d="M1681 93h12M1681 105h12" stroke="#6e6e6e" stroke-width="1.500"/><path d="M1687 95l3 3h-6zM1687 103l-3-3h6z" fill="#6e6e6e"/>
 <path d="M1707 92h12M1707 99h12M1707 106h12" stroke="#6e6e6e" stroke-width="1.300" stroke-dasharray="12 0"/><path d="M1713 97l-3-3h6zM1713 101l3 3h-6z" fill="#6e6e6e"/>
 <path d="M1744 90v18M1749 90v18" stroke="#6e6e6e" stroke-width="2"/><path d="M1739 99h4M1750 99h4" stroke="#6e6e6e" stroke-width="2"/>
 <path d="M1773 106l7-7.500a4.500 4.500 0 0 1 4.500-6.500l-2.500 3 2 2 3-2.500a4.500 4.500 0 0 1-6 5l-6.500 7.500z" fill="#6e6e6e"/>
 <path d="M1583 121l8 5-8 5z" fill="#a3a3a3"/>
 <use href="#eb" x="1600" y="119" fill="#b2bec6"/>
 <!-- build panel icons -->
 <use href="#gear" x="1860" y="701"/>
 <path d="M1880 701h12" stroke="#6e6e6e" stroke-width="2"/>
 <g transform="translate(28,723)" fill="#499c54" stroke="#499c54"><use href="#hamm"/></g>
 <path d="M31 762l4-6-3-3 5-4 7 6-4 4-3-2-5 7z" fill="#6e6e6e"/>
 <path d="M29 782a7 5 0 0 1 14 0a7 5 0 0 1-14 0z" fill="#6e6e6e"/><circle cx="36" cy="782" r="3.500" fill="#f2f2f2"/><circle cx="36" cy="782" r="1.800" fill="#6e6e6e"/><path d="M40 788h4l-2 2z" fill="#6e6e6e"/>
 <path d="M54 721h9l-4.500 8z" fill="#a3a3a3"/>
 <use href="#warn" x="72" y="722"/>
 <use href="#warn" x="90" y="742"/>
 <path d="M1878 725h14M1878 730h10a2.500 2.500 0 0 1 0 5h-4" fill="none" stroke="#6e6e6e" stroke-width="1.500"/><path d="M1886 733l-3 2 3 2.500z" fill="#6e6e6e"/><path d="M1878 735h3" stroke="#6e6e6e" stroke-width="1.500"/>
 <path d="M1879 752h5M1879 757h5M1879 762h13" stroke="#6e6e6e" stroke-width="1.600"/><path d="M1889 750v8m-3-3l3 3 3-3" fill="none" stroke="#6e6e6e" stroke-width="1.500"/>
 <!-- bottom bar icons -->
 <path d="M33 1003l8 6-8 6z" fill="#6e6e6e"/>
 <path d="M103 1004h2M103 1008.500h2M103 1013h2M107 1004h6M107 1008.500h6M107 1013h6" stroke="#6e6e6e" stroke-width="1.300"/>
 <path d="M171 1015a6.500 6.500 0 0 1 12-3" fill="none" stroke="#6e6e6e" stroke-width="2"/><path d="M175 1014l3-5" stroke="#6e6e6e" stroke-width="1.500"/>
 <path d="M247 1004h11M247 1009h7M247 1014h10" stroke="#6e6e6e" stroke-width="1.800"/>
 <g transform="translate(329,1001)" fill="#6e6e6e" stroke="#6e6e6e"><use href="#hamm"/></g>
 <rect x="395" y="1003" width="11" height="11" fill="#6e6e6e"/><path d="M397 1005l2.500 2-2.500 2M400 1010h3" fill="none" stroke="#fff"/>
 <circle cx="1826.500" cy="1009" r="6.500" fill="#f0a30a"/><text x="1826.500" y="1013" font-size="10.500" text-anchor="middle" font-family="Liberation Sans" fill="#222">1</text>
 <rect x="8" y="1021" width="9" height="6" fill="none" stroke="#666"/>
</svg>

<!-- balloon -->
<div class="b" style="left:18px;top:948px;width:322px;height:49px;background:#b9ecb9;border:1px solid #a6d9a6;border-radius:3px;box-sizing:border-box;box-shadow:0 1px 6px rgba(0,0,0,.18)"></div>
<svg width="1920" height="1025"><path d="M48 996h16l-8 9z" fill="#b9ecb9"/></svg>
<span class="t" style="left:29px;top:955px">Install successfully finished in 346 ms.</span>
<span class="t" style="left:29px;top:972px;letter-spacing:.02px">App restart successful without requiring a re-install.</span>

<!-- notification -->
<div class="b" style="left:1553px;top:915px;width:340px;height:72px;background:#f2f2f2;border:1px solid #bdbdbd;box-sizing:border-box;border-radius:2px;box-shadow:0 2px 6px rgba(0,0,0,.15)"></div>
<svg width="1920" height="1025"><g transform="translate(1564,925)"><use href="#warn"/></g><path d="M1871 945l6 6 6-6" fill="none" stroke="#c4c4c4" stroke-width="1.500"/><path d="M1631 971h7l-3.500 4z" fill="#5f82d6"/></svg>
<span class="t" style="left:1585px;top:922px;letter-spacing:-.1px">Your anti-virus program might be impacting</span>
<span class="t" style="left:1585px;top:939px;letter-spacing:.17px">your build performance. Android Studio...</span>
<span class="t l" style="left:1585px;top:963px">Actions</span>
<span class="t l" style="left:1660px;top:963px">Details</span>

<!-- speed widget -->
<svg width="1920" height="1025">
 <circle cx="1761" cy="541" r="38" fill="#fafafa"/>
 <circle cx="1761" cy="541" r="30.500" fill="#fff8ee" stroke="#ffab3d" stroke-width="5.500"/>
 <path d="M1761 510.500a30.500 30.500 0 0 0-23.900 11.600" fill="none" stroke="#fbf4ea" stroke-width="5.500"/>
 <text x="1743" y="544" font-size="26" font-family="Liberation Sans" fill="#555">86<tspan font-size="12">%</tspan></text>
 <path d="M1744 560v-7m-2.500 2.500l2.500-3.500 2.500 3.500" fill="#1e88e5" stroke="#1e88e5" stroke-width="1.200"/>
 <text x="1751" y="560" font-size="9.500" font-family="Liberation Sans" fill="#444">3.4K/s</text>
</svg>

<!-- phone -->
<div class="b" style="left:1229px;top:317px;width:3px;height:57px;background:#8a8a8a;border-radius:0 1px 1px 0"></div>
<div class="b" style="left:1229px;top:445px;width:3px;height:115px;background:#8a8a8a;border-radius:0 1px 1px 0"></div>
<div class="b" style="left:826px;top:96px;width:403px;height:845px;border-radius:46px;background:linear-gradient(#000 0,#000 92%,#1f1f1f 100%);box-shadow:inset 0 0 0 1.500px #5a5a5a,inset 0 0 0 5px #202020,inset 0 0 0 7px #0a0a0a"></div>
<div class="b" style="left:880px;top:105px;width:295px;height:1px;background:#777"></div>
<div class="b" style="left:1014px;top:115px;width:26px;height:9px;border-radius:5px;background:#08080b"></div>
<div class="b" style="left:951px;top:141px;width:154px;height:10px;box-sizing:border-box;border-radius:5px;background:#141414;border:1px solid #2c2c2c"></div>
<div class="b" style="left:949px;top:891px;width:153px;height:9px;box-sizing:border-box;border-radius:5px;background:#1a1a1a;border:1px solid #333"></div>
<div class="b" style="left:888px;top:139px;width:17px;height:17px;border-radius:50%;background:#1c1c1f"></div>
<div class="b" style="left:893px;top:144px;width:6px;height:6px;border-radius:50%;background:#2b3f8c"></div>
<span class="t" style="left:855px;top:193px;color:#fff;font-size:13.500px;letter-spacing:.2px">3:18</span>
<div class="b" style="left:843px;top:212px;width:369px;height:591px;background:#fff"></div>
<div class="b" style="left:843px;top:212px;width:369px;height:58px;background:#a9fea9"></div>
<span class="t" style="left:984px;top:228px;font:21.500px/28px 'Noto Sans CJK SC',sans-serif;color:#444">高级工具</span>
<span class="t" style="left:872px;top:272px;font:16px/24px 'Noto Sans CJK SC',sans-serif;color:#333">手机归属地查询</span>
<span class="t" style="left:872px;top:300.500px;font:16px/24px 'Noto Sans CJK SC',sans-serif;color:#333">短信的备份</span>
<span class="t" style="left:872px;top:329px;font:16px/24px 'Noto Sans CJK SC',sans-serif;color:#333">短信的还原</span>
<span class="t" style="left:872px;top:358px;font:16px/24px 'Noto Sans CJK SC',sans-serif;color:#333">程序锁</span>
<svg width="1920" height="1025">
 <defs>
  <linearGradient id="og" x1="0" y1="0" x2="0" y2="1"><stop offset="0" stop-color="#ffc80a"/><stop offset="1" stop-color="#ff8c10"/></linearGradient>
  <g id="star"><path d="M0-11.500L3.500-4.300 11.300-3.300 5.700 2 7.100 9.700 0 6-7.100 9.700-5.700 2-11.300-3.300-3.500-4.300Z" fill="#e8e8e8" stroke="#bdbdbd" stroke-linejoin="round"/><path d="M0-8.500L2.600-3.200 8.400-2.400 4.200 1.500 5.200 7.200 0 4.400-5.200 7.200-4.200 1.500-8.400-2.400-2.600-3.200Z" fill="url(#og)"/></g>
 </defs>
 <use href="#star" x="857" y="284.500"/><use href="#star" x="857" y="313"/><use href="#star" x="857" y="342"/><use href="#star" x="857" y="370.500"/>
 <!-- status icons -->
 <path d="M894 197h6a1 1 0 0 1 1 1v8a1 1 0 0 1-1 1h-8a1 1 0 0 1-1-1v-6z" fill="#fff"/>
 <path d="M1159 199a10 10 0 0 1 15 0l-5 7h-3v1z" fill="#fff"/><path d="M1169 203l3 3m0-3l-3 3" stroke="#fff"/>
 <path d="M1185 196v11h-11z" fill="#fff"/>
 <path d="M1193 197v-1h3v1h2v10h-7v-10z" fill="#fff"/>
 <!-- nav -->
 <path d="M930 818v15l-12-7.500z" fill="#9a9a9a"/>
 <circle cx="1027" cy="825" r="6.500" fill="#9a9a9a"/>
 <rect x="1123" y="819" width="13" height="13" rx="1" fill="#9a9a9a"/>
</svg>

<!-- emulator toolbar -->
<div class="b" style="left:1237px;top:96px;width:65px;height:514px;box-sizing:border-box;border:1px solid #000;background:#f0f0f0"></div>
<svg width="1920" height="1025">
 <path d="M1253 110.500h7" stroke="#a8b5bc" stroke-width="1.500"/>
 <path d="M1280 107.500l6 6m0-6l-6 6" stroke="#607d8b" stroke-width="1.200"/>
 <g fill="#607d8b">
  <g transform="translate(1257,132)"><path fill="none" stroke="#607d8b" stroke-width="2.400" d="M12 3v9M7 6a8.500 8.500 0 1 0 10 0"/></g>
  <g transform="translate(1257,176)"><path d="M3 9v6h4l5 5V4L7 9H3zm13.500 3c0-1.770-1.020-3.290-2.500-4.030v8.050c1.480-.73 2.500-2.250 2.500-4.020zM14 3.230v2.060c2.890.86 5 3.540 5 6.710s-2.110 5.850-5 6.710v2.060c4.010-.91 7-4.490 7-8.770s-2.990-7.860-7-8.770z"/></g>
  <g transform="translate(1257,220)"><path d="M18.500 12c0-1.770-1.020-3.290-2.500-4.030v8.050c1.480-.72 2.500-2.240 2.500-4.020zM5 9v6h4l5 5V4L9 9H5z"/></g>
  <g transform="translate(1257,264)"><rect x="6" y="4.500" width="12" height="16" rx="1.500" fill="none" stroke="#607d8b" stroke-width="2.200" transform="rotate(-45 12 12.500)"/><path d="M14 0.500a12 12 0 0 1 9.500 9.500" fill="none" stroke="#607d8b" stroke-width="1.500"/></g>
  <g transform="translate(1257,308)"><rect x="6" y="4.500" width="12" height="16" rx="1.500" fill="none" stroke="#607d8b" stroke-width="2.200" transform="rotate(45 12 12.500)"/><path d="M10 0.500a12 12 0 0 0-9.500 9.500" fill="none" stroke="#607d8b" stroke-width="1.500"/></g>
  <g transform="translate(1257,352)"><path d="M9 2L7.170 4H4c-1.100 0-2 .9-2 2v12c0 1.100.9 2 2 2h16c1.100 0 2-.9 2-2V6c0-1.100-.9-2-2-2h-3.170L15 2H9zm3 15c-2.760 0-5-2.240-5-5s2.240-5 5-5 5 2.240 5 5-2.240 5-5 5z"/><circle cx="12" cy="12" r="3"/></g>
  <g transform="translate(1257,396)"><circle cx="10.500" cy="10.500" r="6.500" fill="none" stroke="#607d8b" stroke-width="1.800"/><path d="M15.500 15.500l6 5.500M10.500 7.500v6M7.500 10.500h6" fill="none" stroke="#607d8b" stroke-width="1.500"/></g>
  <path d="M1275 444.700v14.500l-12-7.200z" fill="none" stroke="#607d8b" stroke-width="1.800" stroke-linejoin="round"/>
  <circle cx="1269" cy="496" r="6.500" fill="none" stroke="#607d8b" stroke-width="1.800"/>
  <rect x="1262.500" y="533.500" width="13" height="13" rx="1" fill="none" stroke="#607d8b" stroke-width="1.800"/>
  <circle cx="1263" cy="584" r="1.800"/><circle cx="1269" cy="584" r="1.800"/><circle cx="1275" cy="584" r="1.800"/>
 </g>
</svg>

</div></body></html>
